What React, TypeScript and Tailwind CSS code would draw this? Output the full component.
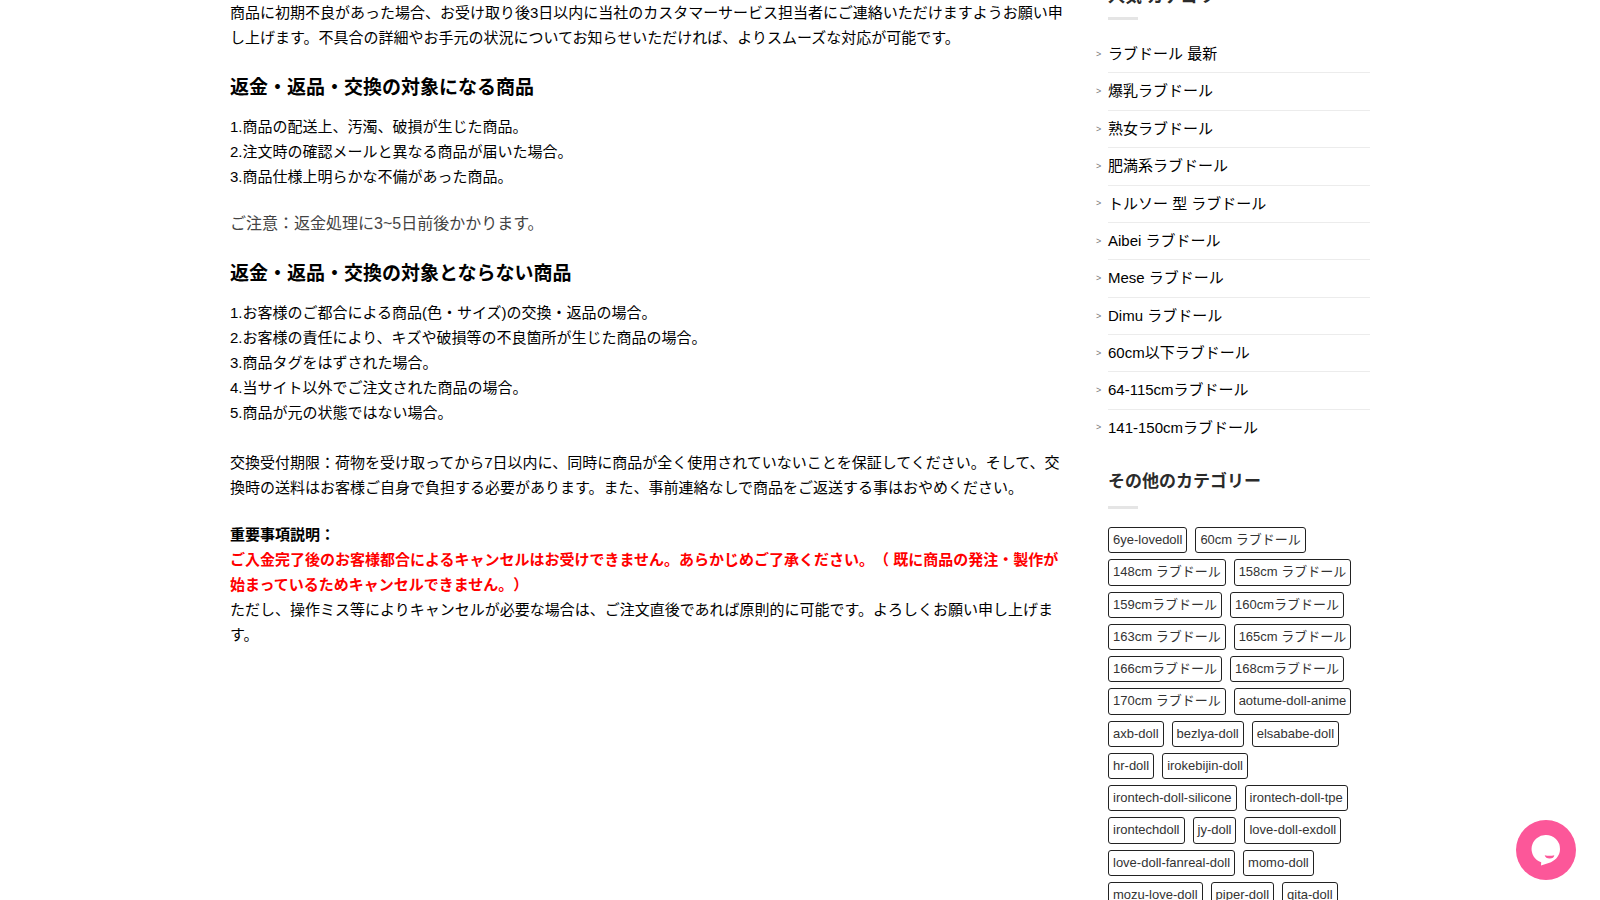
const popularCategories = [
  "ラブドール 最新",
  "爆乳ラブドール",
  "熟女ラブドール",
  "肥満系ラブドール",
  "トルソー 型 ラブドール",
  "Aibei ラブドール",
  "Mese ラブドール",
  "Dimu ラブドール",
  "60cm以下ラブドール",
  "64-115cmラブドール",
  "141-150cmラブドール",
];

const tags = [
  "6ye-lovedoll",
  "60cm ラブドール",
  "148cm ラブドール",
  "158cm ラブドール",
  "159cmラブドール",
  "160cmラブドール",
  "163cm ラブドール",
  "165cm ラブドール",
  "166cmラブドール",
  "168cmラブドール",
  "170cm ラブドール",
  "aotume-doll-anime",
  "axb-doll",
  "bezlya-doll",
  "elsababe-doll",
  "hr-doll",
  "irokebijin-doll",
  "irontech-doll-silicone",
  "irontech-doll-tpe",
  "irontechdoll",
  "jy-doll",
  "love-doll-exdoll",
  "love-doll-fanreal-doll",
  "momo-doll",
  "mozu-love-doll",
  "piper-doll",
  "qita-doll",
];

const refundable = [
  "1.商品の配送上、汚濁、破損が生じた商品。",
  "2.注文時の確認メールと異なる商品が届いた場合。",
  "3.商品仕様上明らかな不備があった商品。",
];

const nonRefundable = [
  "1.お客様のご都合による商品(色・サイズ)の交換・返品の場合。",
  "2.お客様の責任により、キズや破損等の不良箇所が生じた商品の場合。",
  "3.商品タグをはずされた場合。",
  "4.当サイト以外でご注文された商品の場合。",
  "5.商品が元の状態ではない場合。",
];

function ChatButton() {
  return (
    <button
      type="button"
      aria-label="Chat"
      className="fixed right-6 bottom-5 h-[60px] w-[60px] cursor-pointer rounded-full bg-[#fc5799]"
    >
      <svg viewBox="0 0 60 60" className="h-full w-full" aria-hidden="true">
        <path
          d="M30 15a14 14 0 0 1 14 14c0 6-3.500 10.500-9 13.200L25 45.500l.2-3.200A14 14 0 0 1 30 15z"
          fill="#fff"
        />
        <path d="M28.700 35.200c3 .8 6.500.8 9.600 0 0 2-2 3.300-4.600 3.300s-4.700-1.300-5-3.300z" fill="#fc5799" />
      </svg>
    </button>
  );
}

export default function App() {
  return (
    <div className="h-screen overflow-hidden bg-white font-['Liberation_Sans','Noto_Sans_CJK_JP',sans-serif] text-black [text-spacing-trim:space-all]">
      <div className="mx-auto flex max-w-[1140px] items-start gap-10">
        <main className="min-w-0 flex-1 text-[15px] leading-[25px]" lang="ja">
          <p>
            商品に初期不良があった場合、お受け取り後3日以内に当社のカスタマーサービス担当者にご連絡いただけますようお願い申し上げます。不具合の詳細やお手元の状況についてお知らせいただければ、よりスムーズな対応が可能です。
          </p>

          <h3 className="mt-[25px] mb-3.5 text-[19px] font-bold">返金・返品・交換の対象になる商品</h3>
          <ul>
            {refundable.map((item) => (
              <li key={item}>{item}</li>
            ))}
          </ul>

          <p className="mt-[22px] text-base leading-[25px] text-[#444]">ご注意：返金処理に3~5日前後かかります。</p>

          <h3 className="mt-[25px] mb-3.5 text-[19px] font-bold">返金・返品・交換の対象とならない商品</h3>
          <ul>
            {nonRefundable.map((item) => (
              <li key={item}>{item}</li>
            ))}
          </ul>

          <p className="mt-[25px]">
            交換受付期限：荷物を受け取ってから7日以内に、同時に商品が全く使用されていないことを保証してください。そして、交換時の送料はお客様ご自身で負担する必要があります。また、事前連絡なしで商品をご返送する事はおやめください。
          </p>

          <p className="mt-[22px]">
            <strong>重要事項説明：</strong>
            <br />
            <strong className="text-[#f00]">
              ご入金完了後のお客様都合によるキャンセルはお受けできません。あらかじめご了承ください。（ 既に商品の発注・製作が始まっているためキャンセルできません。）
            </strong>
            <br />
            ただし、操作ミス等によりキャンセルが必要な場合は、ご注文直後であれば原則的に可能です。よろしくお願い申し上げます。
          </p>
        </main>

        <aside className="-mt-[15px] w-[262px] shrink-0" lang="ja">
          <section>
            <h2 className="text-[17px] leading-6 font-bold text-[#2b2b2b]">人気 カテゴリー</h2>
            <div className="mt-2 h-[3px] w-[30px] bg-[#e5e5e5]" />
            <ul className="mt-4">
              {popularCategories.map((name) => (
                <li key={name} className="group -ml-3 flex items-center">
                  <span className="w-3 text-[9px] text-[#777]">&gt;</span>
                  <a
                    href="#"
                    className="flex-1 border-b border-[#ececec] py-1.5 text-[15px] leading-relaxed group-last:border-b-0"
                  >
                    {name}
                  </a>
                </li>
              ))}
            </ul>
          </section>

          <section className="mt-6">
            <h2 className="text-[17px] leading-6 font-bold text-[#2b2b2b]">その他のカテゴリー</h2>
            <div className="mt-3 h-[3px] w-[30px] bg-[#e5e5e5]" />
            <div className="mt-[18px] flex flex-wrap gap-x-2 gap-y-1.5">
              {tags.map((tag) => (
                <a
                  key={tag}
                  href="#"
                  className="rounded-[3px] border border-[#222] px-1 py-1 text-[13px] leading-tight text-[#333]"
                >
                  {tag}
                </a>
              ))}
            </div>
          </section>
        </aside>
      </div>

      <ChatButton />
    </div>
  );
}
